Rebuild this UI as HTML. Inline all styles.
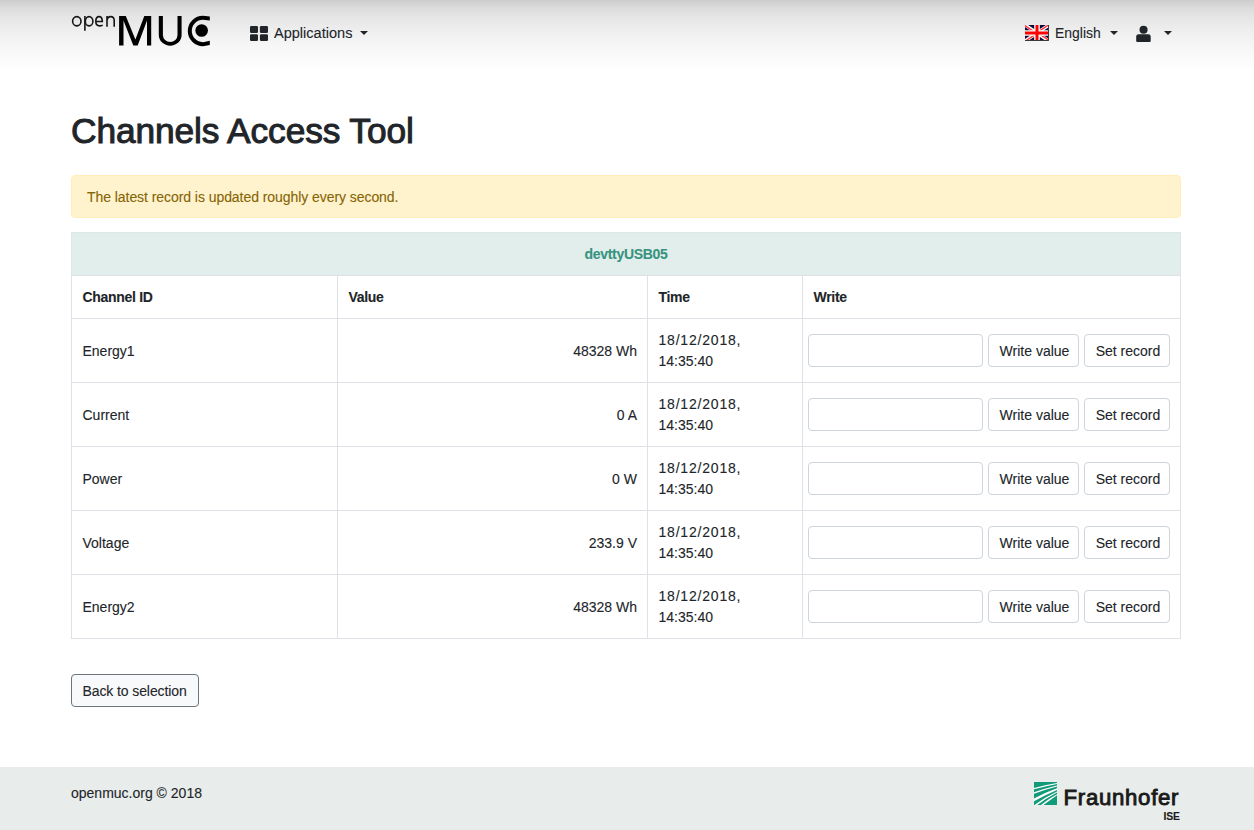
<!DOCTYPE html>
<html>
<head>
<meta charset="utf-8">
<style>
*{box-sizing:border-box;margin:0;padding:0}
html,body{width:1254px;height:830px;overflow:hidden;background:#fff}
body{font-family:"Liberation Sans",sans-serif;font-size:14px;line-height:21px;color:#212529;position:relative;-webkit-text-stroke:0.1px currentColor}
.nav{position:absolute;left:0;top:0;width:1254px;height:68px;background:linear-gradient(#cccccc 0%,#dcdcdc 12%,#e5e5e5 24%,#efefef 47%,#f7f7f7 70%,#fdfdfd 100%)}
.abs{position:absolute}
.navtxt{font-size:15.5px;line-height:18px;transform-origin:0 0;color:#212529;white-space:nowrap}
.caret{position:absolute;width:0;height:0;border-left:4px solid transparent;border-right:4px solid transparent;border-top:4.5px solid #212529}
h1{position:absolute;left:71px;top:110.3px;font-size:35.3px;line-height:42px;font-weight:normal;-webkit-text-stroke:1px #212529;letter-spacing:-0.1px;color:#212529;white-space:nowrap}
.alert{position:absolute;left:71px;top:175px;width:1110px;height:43px;background:#fff3cd;border:1px solid #ffeeba;border-radius:4px;color:#856404;padding:10.7px 0 0 15px;letter-spacing:-0.06px}
table{position:absolute;left:71px;top:232px;width:1109px;border-collapse:collapse;table-layout:fixed}
td,th{border:1px solid #dee2e6;padding:0 10.5px;vertical-align:middle;text-align:left}
th{font-weight:bold;letter-spacing:-0.3px}
tr.grp td{background:#e2eeeb;height:43px;text-align:center;color:#36937f;font-weight:bold;letter-spacing:-0.3px;border-color:#dce8e5;border-bottom-color:#dee2e6}
tr.hd th{height:43px}
tr.row td{height:64px}
td.val{text-align:right;padding-right:10px}
tr.row td{padding-top:1px}
tr.row td.tm{padding-top:0}
tr.row td.wr{padding-top:0}
.d1{letter-spacing:0.8px}
.inp{display:inline-block;width:175px;height:33px;border:1px solid #ced4da;border-radius:4px;vertical-align:middle;background:#fff}
.btn{display:inline-block;height:33px;border:1px solid #ced4da;border-radius:4px;vertical-align:middle;background:#fff;line-height:33px;text-align:center;margin-left:5px;padding-left:3px}
td.wr{padding:0 0 0 4.5px;white-space:nowrap;font-size:0}
td.wr .btn{font-size:14px}
.back{position:absolute;left:71px;top:674px;width:128px;height:33px;border:1px solid #6c757d;border-radius:4px;background:#f8f9fa;line-height:32px;padding-left:10.5px;letter-spacing:-0.1px;white-space:nowrap}
.footer{position:absolute;left:0;top:767px;width:1254px;height:63px;background:#e8ecea}
</style>
</head>
<body>
<div class="nav">
  <svg class="abs" style="left:68px;top:10px" width="150" height="42" viewBox="68 10 150 42">
    <g fill="none" stroke="#151515" stroke-width="1.6">
      <ellipse cx="76.8" cy="21.25" rx="4.2" ry="4.65"/>
      <path d="M84.9 16 V30.7"/>
      <ellipse cx="89.1" cy="21.25" rx="3.8" ry="4.65"/>
      <path d="M95.9 21.5 H102.3 C102.3 18.3 101 16.6 99.1 16.6 C97 16.6 95.8 18.6 95.8 21.3 C95.8 24.2 97.2 25.9 99.5 25.9 C100.8 25.9 101.8 25.6 102.7 25.1"/>
      <path d="M107 15.9 V26.7 M107 20.2 Q107.6 16.6 110.6 16.6 Q114.2 16.6 114.2 20.5 V26.7"/>
    </g>
    <path d="M119.1 45.6 L119.1 16.1 L125.8 16.1 L135.4 39.5 L144.3 16.1 L151.2 16.1 L151.2 45.6 L147 45.6 L147 20.5 L137.7 45.6 L133.3 45.6 L123.5 20.5 L123.5 45.6 Z" fill="#000"/>
    <path d="M158.8 16.1 H162.9 V35 A7.3 7.1 0 0 0 177.5 35 V16.1 H181.6 V35 A11.4 10.7 0 0 1 158.8 35 Z" fill="#000"/>
    <path d="M209.8 16.5 L203 15.75 A15.2 15.2 0 0 0 203 46.15 L209.8 45 L209.8 40.7 L203 42.15 A11.2 11.2 0 0 1 203 19.75 L209.8 20.6 Z" fill="#000"/>
    <circle cx="201.65" cy="30.55" r="6.3" fill="#000"/>
  </svg>
  <svg class="abs" style="left:249.9px;top:25.9px" width="19" height="15" viewBox="0 0 19 15">
    <rect x="0" y="0" width="8" height="6.9" rx="1.2" fill="#212529"/>
    <rect x="9.9" y="0" width="8.1" height="6.9" rx="1.2" fill="#212529"/>
    <rect x="0" y="8.2" width="8" height="6.8" rx="1.2" fill="#212529"/>
    <rect x="9.9" y="8.2" width="8.1" height="6.8" rx="1.2" fill="#212529"/>
  </svg>
  <div class="abs navtxt" style="left:273.5px;top:24.3px;transform:scaleX(0.938)">Applications</div>
  <div class="caret" style="left:360px;top:31px"></div>

  <svg class="abs" style="left:1025px;top:25px" width="24" height="16" viewBox="0 0 24 16">
    <rect width="24" height="16" fill="#0a0a3c"/>
    <path d="M0,0 L24,16 M24,0 L0,16" stroke="#fff" stroke-width="3.4"/>
    <path d="M0,0.6 L10,7.3 M24,15.4 L14,8.7 M23.4,0 L13.6,6.6 M0.6,16 L10.4,9.4" stroke="#ff2a2a" stroke-width="1.3"/>
    <path d="M12,0 V16 M0,8 H24" stroke="#fff" stroke-width="5.6"/>
    <path d="M12,0 V16 M0,8 H24" stroke="#ff0000" stroke-width="3"/>
    <path d="M23.5,0 V15.5 H0" stroke="#3a3a3a" stroke-width="1" fill="none"/>
  </svg>
  <div class="abs navtxt" style="left:1054.5px;top:24.3px;transform:scaleX(0.9)">English</div>
  <div class="caret" style="left:1110px;top:31px"></div>
  <svg class="abs" style="left:1136px;top:25px" width="16" height="18" viewBox="0 0 16 18">
    <circle cx="7.55" cy="4.8" r="4.05" fill="#212529"/>
    <path d="M0.2 15.9 V11.6 Q0.2 9.25 2.6 9.25 H12.3 Q14.7 9.25 14.7 11.6 V15.9 Q14.7 16.9 13.7 16.9 H1.2 Q0.2 16.9 0.2 15.9 Z" fill="#212529"/>
  </svg>
  <div class="caret" style="left:1164px;top:31px"></div>
</div>

<h1>Channels Access Tool</h1>

<div class="alert">The latest record is updated roughly every second.</div>

<table>
  <colgroup><col style="width:266px"><col style="width:310px"><col style="width:155px"><col style="width:378px"></colgroup>
  <tr class="grp"><td colspan="4">devttyUSB05</td></tr>
  <tr class="hd"><th>Channel ID</th><th>Value</th><th>Time</th><th>Write</th></tr>
  <tr class="row"><td>Energy1</td><td class="val">48328 Wh</td><td class="tm"><span class="d1">18/12/2018,</span><br>14:35:40</td><td class="wr"><span class="inp"></span><span class="btn" style="width:91px">Write value</span><span class="btn" style="width:86px">Set record</span></td></tr>
  <tr class="row"><td>Current</td><td class="val">0 A</td><td class="tm"><span class="d1">18/12/2018,</span><br>14:35:40</td><td class="wr"><span class="inp"></span><span class="btn" style="width:91px">Write value</span><span class="btn" style="width:86px">Set record</span></td></tr>
  <tr class="row"><td>Power</td><td class="val">0 W</td><td class="tm"><span class="d1">18/12/2018,</span><br>14:35:40</td><td class="wr"><span class="inp"></span><span class="btn" style="width:91px">Write value</span><span class="btn" style="width:86px">Set record</span></td></tr>
  <tr class="row"><td>Voltage</td><td class="val">233.9 V</td><td class="tm"><span class="d1">18/12/2018,</span><br>14:35:40</td><td class="wr"><span class="inp"></span><span class="btn" style="width:91px">Write value</span><span class="btn" style="width:86px">Set record</span></td></tr>
  <tr class="row"><td>Energy2</td><td class="val">48328 Wh</td><td class="tm"><span class="d1">18/12/2018,</span><br>14:35:40</td><td class="wr"><span class="inp"></span><span class="btn" style="width:91px">Write value</span><span class="btn" style="width:86px">Set record</span></td></tr>
</table>

<div class="back">Back to selection</div>

<div class="footer">
  <div class="abs" style="left:71px;top:16px;white-space:nowrap">openmuc.org © 2018</div>
  <svg class="abs" style="left:1034px;top:15px" width="23" height="23" viewBox="0 0 23 23">
    <rect width="23" height="23" fill="#139a7a"/>
    <path d="M0 5.9 Q11 2.8 23 0.9 L23 2.0 Q11 4.4 0 7.2 Z" fill="#fff"/>
    <path d="M0 10.3 Q11 6.2 23 3.4 L23 4.6 Q11 7.8 0 11.7 Z" fill="#fff"/>
    <path d="M0 16.4 Q11 10.5 23 6.2 L23 8.0 Q11 13 0 19.3 Z" fill="#fff"/>
    <path d="M0.4 23 Q11 15 23 9.4 L23 10.6 Q12 16.5 3.2 23 Z" fill="#fff"/>
    <path d="M6.9 23 Q14 17 23 12.2 L23 13.2 Q15.5 18.5 9.4 23 Z" fill="#fff"/>
  </svg>
  <div class="abs" style="left:1063.5px;top:15.5px;font-size:22.2px;line-height:30px;font-weight:normal;-webkit-text-stroke:0.9px #1a1a1a;letter-spacing:0.72px;color:#1a1a1a;white-space:nowrap">Fraunhofer</div>
  <div class="abs" style="left:1163.5px;top:42.5px;font-size:10.4px;line-height:14px;font-weight:bold;letter-spacing:-0.2px;color:#1a1a1a;white-space:nowrap">ISE</div>
</div>
</body>
</html>
